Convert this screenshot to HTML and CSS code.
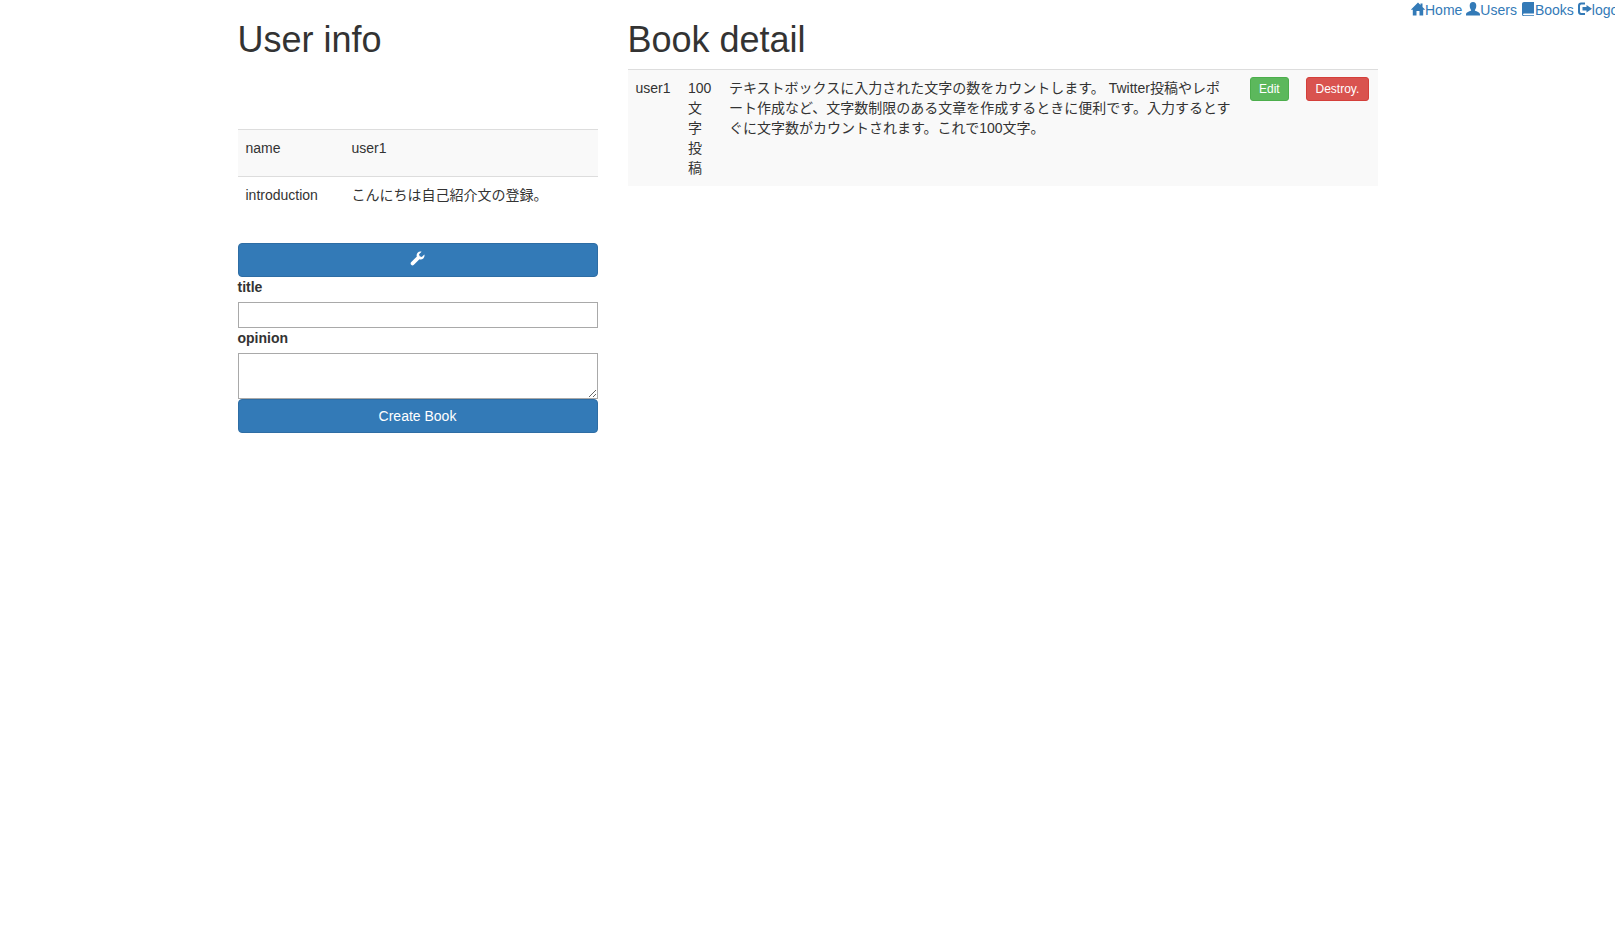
FILE: index.html
```html
<!DOCTYPE html>
<html lang="en">
<head>
  <meta charset="UTF-8" />
  <title>Book detail</title>
  <link rel="stylesheet" href="styles.css">
</head>
<body>
  <header class="site-header">
    <a href="#"><svg class="icon" viewBox="0 0 14 14"><path d="M7 0.5 L9.5 3 V1.5 H11.5 V5 L14.3 7.8 H12.2 V13.5 H8.5 V9 H5.5 V13.5 H1.8 V7.8 H-0.3 Z"/></svg>Home</a>
    <a href="#"><svg class="icon" viewBox="0 0 14 14"><path d="M7 0 C9.2 0 10.3 1.7 10.3 3.8 C10.3 6 9.3 7.6 8.8 8.2 C9.2 9.3 14 9.7 14 12.4 V13.6 H0 V12.4 C0 9.7 4.8 9.3 5.2 8.2 C4.7 7.6 3.7 6 3.7 3.8 C3.7 1.7 4.8 0 7 0 Z"/></svg>Users</a>
    <a href="#"><svg class="icon" viewBox="0 0 14 14"><path d="M3 0 H13 V11.5 H3 C2.4 11.5 2 11.9 2 12.4 C2 12.9 2.4 13.2 3 13.2 H13 V14 H2.5 C1.5 14 1 13.2 1 12.2 V2 C1 0.9 1.9 0 3 0 Z"/></svg>Books</a>
    <a href="#"><svg class="icon" viewBox="0 0 14 14"><path d="M3 0.5 H7 V2.5 H3.5 C2.7 2.5 2 3.2 2 4 V9.5 C2 10.3 2.7 11 3.5 11 H7 V13 H3 C1.3 13 0 11.7 0 10 V3.5 C0 1.8 1.3 0.5 3 0.5 Z M8.5 3 L14 6.8 L8.5 10.5 V8.5 H4.5 V5 H8.5 Z"/></svg>logout</a>
  </header>

  <div class="container">
    <div class="side">
      <h1>User info</h1>
      <div class="avatar-space"></div>
      <table class="info-table">
        <tr class="striped tall">
          <th>name</th>
          <td>user1</td>
        </tr>
        <tr class="tall">
          <th>introduction</th>
          <td>こんにちは自己紹介文の登録。</td>
        </tr>
      </table>
      <a class="btn btn-primary btn-block" href="#"><svg class="icon wrench" viewBox="0 0 14 14"><path d="M13.4 3.2 C13.8 4.6 13.4 6 12.4 6.9 C11.4 7.8 10 8.1 8.8 7.6 L3.4 13 C2.8 13.6 1.8 13.6 1.1 12.9 C0.4 12.2 0.4 11.2 1 10.6 L6.4 5.2 C5.9 4 6.2 2.6 7.1 1.6 C8 0.6 9.4 0.2 10.8 0.6 L8.4 3 L9 5 L11 5.6 Z"/></svg></a>
      <form>
        <label for="title">title</label>
        <input id="title" type="text">
        <label for="opinion">opinion</label>
        <textarea id="opinion"></textarea>
        <button class="btn btn-primary btn-block" type="button">Create Book</button>
      </form>
    </div>
    <div class="main">
      <h1>Book detail</h1>
      <table class="book-table">
        <tr class="striped">
          <td class="col-user">user1</td>
          <td class="col-title">100文字投稿</td>
          <td class="col-body">テキストボックスに入力された文字の数をカウントします。 Twitter投稿やレポート作成など、文字数制限のある文章を作成するときに便利です。入力するとすぐに文字数がカウントされます。これで100文字。</td>
          <td class="col-edit"><a class="btn btn-sm btn-success" href="#">Edit</a></td>
          <td class="col-destroy"><a class="btn btn-sm btn-danger" href="#">Destroy.</a></td>
        </tr>
      </table>
    </div>
  </div>
</body>
</html>
```

FILE: styles.css
```css
html, body {
  margin: 0;
  padding: 0;
  overflow: hidden;
}

body {
  font-family: "Liberation Sans", "Noto Sans CJK JP", sans-serif;
  font-size: 14px;
  line-height: 20px;
  color: #333;
  background: #fff;
}

a {
  color: #337ab7;
  text-decoration: none;
}

.site-header {
  display: flex;
  justify-content: flex-end;
  gap: 4px;
  height: 20px;
  margin-right: -15px;
  white-space: nowrap;
}

.icon {
  width: 14px;
  height: 14px;
  fill: currentColor;
  vertical-align: -1px;
}

.wrench {
  width: 15px;
  height: 15px;
  vertical-align: -1px;
}

.container {
  display: flex;
  width: 1170px;
  margin: -20px auto 0;
}

.side {
  width: 360px;
  padding: 0 15px;
}

.main {
  width: 750px;
  padding: 0 15px;
}

h1 {
  margin: 20px 0 9px;
  font-size: 36px;
  font-weight: 500;
  line-height: 39.6px;
}

.avatar-space {
  height: 60.4px;
}

table {
  width: 100%;
  border-collapse: collapse;
  margin-bottom: 20px;
}

th, td {
  padding: 8px;
  border-top: 1px solid #ddd;
  font-weight: normal;
  text-align: left;
  vertical-align: top;
}

.striped {
  background: #f9f9f9;
}

.tall th, .tall td {
  padding-bottom: 18px;
}

.info-table th {
  width: 90px;
}

.book-table {
  table-layout: fixed;
}

.col-user {
  width: 36.5px;
}

.col-title {
  width: 25px;
}

.col-body {
  width: 504.5px;
}

.col-edit {
  width: 40.5px;
}

.col-destroy {
  width: 63.5px;
}

.col-edit, .col-destroy {
  white-space: nowrap;
}

.book-table .col-edit, .book-table .col-destroy {
  padding-top: 7px;
}

.btn {
  display: inline-block;
  box-sizing: border-box;
  padding: 6px 12px;
  border: 1px solid transparent;
  border-radius: 4px;
  font: inherit;
  text-align: center;
  color: #fff;
}

.btn-block {
  display: block;
  width: 100%;
}

.btn-sm {
  padding: 5px 8.5px;
  font-size: 12px;
  line-height: 12px;
  border-radius: 3px;
}

.btn-primary {
  background: #337ab7;
  border-color: #2e6da4;
}

.btn-success {
  background: #5cb85c;
  border-color: #4cae4c;
}

.btn-danger {
  background: #d9534f;
  border-color: #d43f3a;
}

label {
  display: block;
  margin-bottom: 5px;
  font-weight: bold;
}

input, textarea {
  display: block;
  box-sizing: border-box;
  width: 100%;
  margin: 0;
  border: 1px solid #a9a9a9;
  padding: 1px 2px;
  font: inherit;
  background: #fff;
}

input {
  height: 26px;
}

textarea {
  height: 46px;
}
```
